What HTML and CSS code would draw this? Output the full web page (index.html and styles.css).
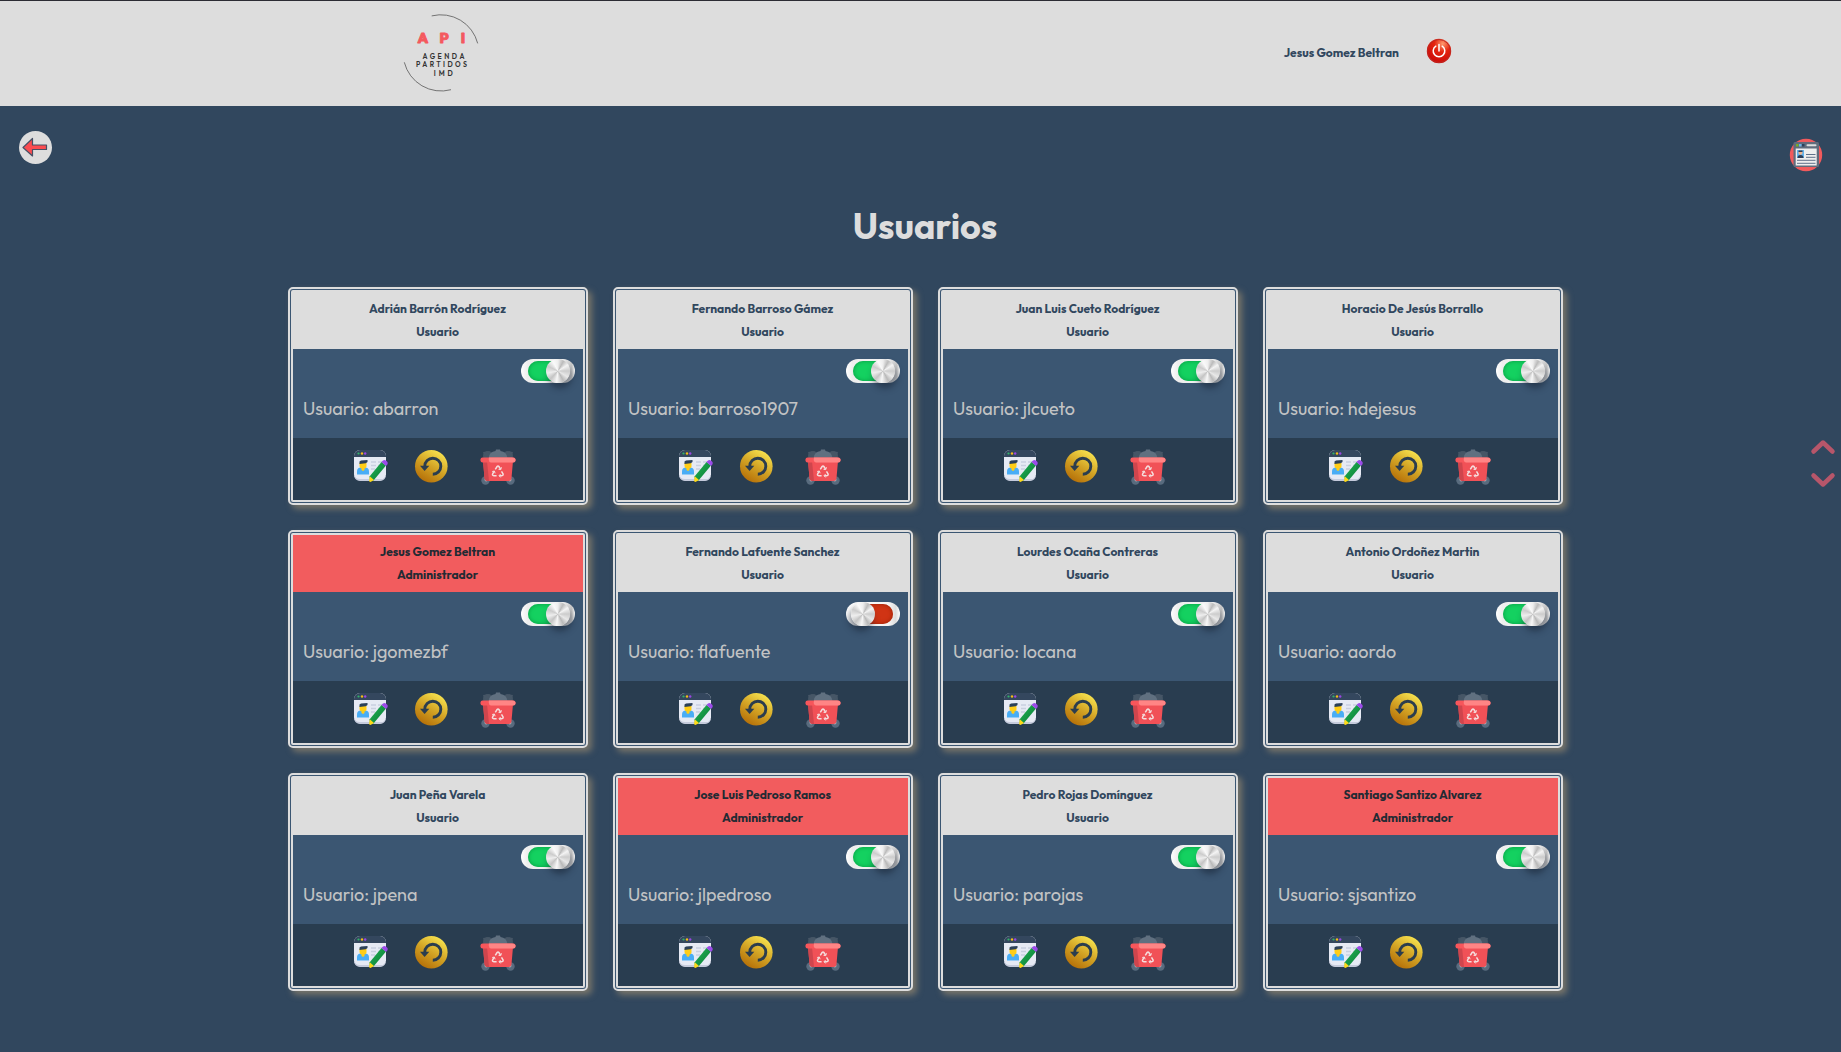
FILE: index.html
```html
<!DOCTYPE html>
<html lang="es">
<head>
<meta charset="utf-8">
<title>Usuarios</title>
<link rel="stylesheet" href="styles.css">
</head>
<body>
<svg class="sprite" width="0" height="0" aria-hidden="true">
  <defs>
    <linearGradient id="gold" x1="0.2" y1="1" x2="0.8" y2="0"><stop offset="0" stop-color="#b26a05"/><stop offset=".5" stop-color="#d3a425"/><stop offset="1" stop-color="#fbe953"/></linearGradient>
    <linearGradient id="pencil" x1="0" y1="0" x2="1" y2="1"><stop offset="0" stop-color="#22b455"/><stop offset="1" stop-color="#087a35"/></linearGradient>
    <radialGradient id="red" cx=".65" cy=".2" r=".85"><stop offset="0" stop-color="#ff9a6e"/><stop offset=".4" stop-color="#e3240f"/><stop offset="1" stop-color="#c90808"/></radialGradient>
  </defs>
  <symbol id="edit" viewBox="0 0 35 34">
    <rect x="1" y="1" width="32" height="30.500" rx="6" fill="#e6eaf4"/>
    <path d="M1 25v1a6 6 0 0 0 6 6h20a6 6 0 0 0 6-6v-1a5 5 0 0 1-6 5H7a6 6 0 0 1-6-5z" fill="#c5cbdc"/>
    <path d="M1 8V7a6 6 0 0 1 6-6h20a6 6 0 0 1 6 6v1z" fill="#34475e"/>
    <circle cx="5.500" cy="4.500" r="1.100" fill="#2fb567"/><circle cx="9" cy="4.500" r="1.200" fill="#f3bc19"/><circle cx="12.200" cy="4.500" r="1.200" fill="#9b45e4"/>
    <path d="M18 13h5M25 13h6M18 16.500h5M25 16.500h4M18 20h4" stroke="#c9d0df" stroke-width="1.300"/>
    <path d="M4 25.500v-3q0-4 4-4h4q4 0 4 4v3z" fill="#49adf5"/>
    <path d="M6.500 14h7v3.500q-.3 2-2 2v1.500l-1.500 1-1.500-1v-1.500q-2-.5-2-2.500z" fill="#ffcd16"/>
    <path d="M6.500 15v-2.500l1.500-1 6.500-.5v2q-1.500 1.500-4 1.500z" fill="#2b4057"/>
    <path d="M16.500 27.500 28.500 13l4.500 3.500-12.500 15-3.500.5z" fill="url(#pencil)"/>
    <path d="M16.800 27.200 21 31l-3.500 2-1.500-.8z" fill="#ffd918"/>
    <path d="m28.500 13 1.500-1.500q1.500-1 3.500.5t.8 3.500L33 17z" fill="#9b4be8"/>
  </symbol>
  <symbol id="reset" viewBox="0 0 34 34">
    <circle cx="17.300" cy="17.200" r="16.300" fill="url(#gold)"/>
    <path d="M10.800 17.200a8 8 0 1 1 8 8" fill="none" stroke="#2b3d4e" stroke-width="2.900"/>
    <path d="M6 16.700h9.300l-4.700 5.200z" fill="#2b3d4e"/>
  </symbol>
  <symbol id="trash" viewBox="0 0 36 36">
    <g fill="#465666"><circle cx="8" cy="7" r="5"/><circle cx="28" cy="7" r="5"/><path d="m3 3 4-.5-3 4zM33 3l-4-.5 3 4z"/></g>
    <path d="M8.500 9q1-6.500 7-7l.5-1.500h4l.5 1.500q6 .5 7 7z" fill="#607080"/>
    <circle cx="5.500" cy="31.500" r="4.200" fill="#586b7e"/><circle cx="30.500" cy="31.500" r="4.200" fill="#586b7e"/>
    <circle cx="6.200" cy="30.800" r="1.700" fill="#a5afb8"/><circle cx="29.800" cy="30.800" r="1.700" fill="#a5afb8"/>
    <path d="M3 12h30l-1.500 17q-.2 3-3 3h-21q-2.500 0-3-3z" fill="#f15157"/>
    <path d="M3 12h4l2 20H7.500q-2.500 0-3-3z" fill="#cf454d"/>
    <rect x=".5" y="8.500" width="35" height="5" rx="2" fill="#f7565b"/><path d="M9 8.500h23q3.500 0 3.500 2.500t-3 2.500H11q-3-.5-2-5z" fill="#ff8585"/>
    <g fill="none" stroke="#f5dede" stroke-width="1.500"><path d="m15.300 20.300 1.800-2.800q.9-1.200 1.800 0l1.600 2.600M21.500 22.300l1.500 2.500q.6 1.800-1.200 1.900h-2.600M16.600 26.700h-2.700q-2-.2-1.200-1.900l1.300-2.400"/><path d="m18.500 20.300 2.300.3.600-2.400M20.600 25l-1.500 1.700 1.500 1.700M12.200 22.500l2.200-.5.700 2.300" stroke-width="1"/></g>
  </symbol>
</svg>

<header class="navbar">
  <svg class="logo" width="80" height="80" viewBox="401 13 80 80">
    <path d="M431.700 15.900A38 38 0 0 1 477.700 43.400M404.300 62.300A38 38 0 0 0 451 89.700" fill="none" stroke="#666" stroke-width=".9"/>
    <g class="logo-name"><text x="417.500" y="43.300">A</text><text x="439.500" y="43.300">P</text><text x="460.800" y="43.300">I</text></g>
    <g class="logo-sub"><text x="422.500" y="58.800" textLength="42">AGENDA</text><text x="416" y="67.300" textLength="51">PARTIDOS</text><text x="433.800" y="75.800" textLength="19">IMD</text></g>
  </svg>
  <div class="session">
    <span class="session-name">Jesus Gomez Beltran</span>
    <svg width="26" height="26" viewBox="0 0 26 26"><circle cx="13" cy="13" r="12.200" fill="url(#red)"/><circle cx="13" cy="13" r="11.500" fill="none" stroke="#bd2a23" stroke-width="1"/><path d="M9.800 8.200a5.800 5.800 0 1 0 6.400 0M13 6.500v6.500" fill="none" stroke="#fff" stroke-width="1.500" stroke-linecap="round"/></svg>
  </div>
</header>

<div class="toolbar">
  <svg class="back" width="34" height="34" viewBox="0 0 34 34"><circle cx="16.500" cy="16.500" r="16.500" fill="#ddd"/><path d="M4 16.500 13.500 7.500V14h14v4.500h-14V25z" fill="#fb4c50" stroke="#475064" stroke-width="1.200" stroke-linejoin="round"/></svg>
  <svg class="listing" width="34" height="34" viewBox="0 0 34 34"><circle cx="17" cy="17" r="16.200" fill="#f15a5c"/><rect x="4.500" y="4" width="25.500" height="25" rx="1.500" fill="#606c7c"/><rect x="6.700" y="10.500" width="21" height="17" fill="#eee"/><rect x="7" y="6" width="2.500" height="2.500" fill="#79ad26"/><rect x="10" y="6" width="2.500" height="2.500" fill="#6ab1e7"/><rect x="13" y="6" width="2.500" height="2.500" fill="#2c405b"/><rect x="17.500" y="6.200" width="10" height="2" rx="1" fill="#ddd"/><rect x="8" y="12" width="7" height="8" fill="#62b3ed"/><path d="M8.500 20q0-3 3-3t3 3z" fill="#2c3d58"/><circle cx="11.500" cy="14.700" r="2" fill="#f0b48d"/><path d="M9.500 14v-1.500h4V14z" fill="#343b4d"/><path d="M17 16.500h9.500M17 19.300h9.500M8 22.300h18.500M8 25.300h18.500" stroke="#607089" stroke-width="1"/></svg>
</div>

<nav class="scroller">
  <svg width="26" height="16" viewBox="0 0 26 16"><path d="M3.500 12.500 13 3.500l9.500 9" /></svg>
  <svg width="26" height="16" viewBox="0 0 26 16"><path d="M3.500 3.500 13 12.500l9.500-9" /></svg>
</nav>

<main class="content">
  <h1>Usuarios</h1>
  <section class="grid">
    <article class="card">
      <header><b>Adrián Barrón Rodríguez</b><b>Usuario</b></header>
      <div class="info"><span class="switch"><i></i></span><p>Usuario: abarron</p></div>
      <footer><svg class="edit"><use href="#edit"/></svg><svg class="reset"><use href="#reset"/></svg><svg class="trash"><use href="#trash"/></svg></footer>
    </article>
    <article class="card">
      <header><b>Fernando Barroso Gámez</b><b>Usuario</b></header>
      <div class="info"><span class="switch"><i></i></span><p>Usuario: barroso1907</p></div>
      <footer><svg class="edit"><use href="#edit"/></svg><svg class="reset"><use href="#reset"/></svg><svg class="trash"><use href="#trash"/></svg></footer>
    </article>
    <article class="card">
      <header><b>Juan Luis Cueto Rodríguez</b><b>Usuario</b></header>
      <div class="info"><span class="switch"><i></i></span><p>Usuario: jlcueto</p></div>
      <footer><svg class="edit"><use href="#edit"/></svg><svg class="reset"><use href="#reset"/></svg><svg class="trash"><use href="#trash"/></svg></footer>
    </article>
    <article class="card">
      <header><b>Horacio De Jesús Borrallo</b><b>Usuario</b></header>
      <div class="info"><span class="switch"><i></i></span><p>Usuario: hdejesus</p></div>
      <footer><svg class="edit"><use href="#edit"/></svg><svg class="reset"><use href="#reset"/></svg><svg class="trash"><use href="#trash"/></svg></footer>
    </article>
    <article class="card admin">
      <header><b>Jesus Gomez Beltran</b><b>Administrador</b></header>
      <div class="info"><span class="switch"><i></i></span><p>Usuario: jgomezbf</p></div>
      <footer><svg class="edit"><use href="#edit"/></svg><svg class="reset"><use href="#reset"/></svg><svg class="trash"><use href="#trash"/></svg></footer>
    </article>
    <article class="card">
      <header><b>Fernando Lafuente Sanchez</b><b>Usuario</b></header>
      <div class="info"><span class="switch off"><i></i></span><p>Usuario: flafuente</p></div>
      <footer><svg class="edit"><use href="#edit"/></svg><svg class="reset"><use href="#reset"/></svg><svg class="trash"><use href="#trash"/></svg></footer>
    </article>
    <article class="card">
      <header><b>Lourdes Ocaña Contreras</b><b>Usuario</b></header>
      <div class="info"><span class="switch"><i></i></span><p>Usuario: locana</p></div>
      <footer><svg class="edit"><use href="#edit"/></svg><svg class="reset"><use href="#reset"/></svg><svg class="trash"><use href="#trash"/></svg></footer>
    </article>
    <article class="card">
      <header><b>Antonio Ordoñez Martin</b><b>Usuario</b></header>
      <div class="info"><span class="switch"><i></i></span><p>Usuario: aordo</p></div>
      <footer><svg class="edit"><use href="#edit"/></svg><svg class="reset"><use href="#reset"/></svg><svg class="trash"><use href="#trash"/></svg></footer>
    </article>
    <article class="card">
      <header><b>Juan Peña Varela</b><b>Usuario</b></header>
      <div class="info"><span class="switch"><i></i></span><p>Usuario: jpena</p></div>
      <footer><svg class="edit"><use href="#edit"/></svg><svg class="reset"><use href="#reset"/></svg><svg class="trash"><use href="#trash"/></svg></footer>
    </article>
    <article class="card admin">
      <header><b>Jose Luis Pedroso Ramos</b><b>Administrador</b></header>
      <div class="info"><span class="switch"><i></i></span><p>Usuario: jlpedroso</p></div>
      <footer><svg class="edit"><use href="#edit"/></svg><svg class="reset"><use href="#reset"/></svg><svg class="trash"><use href="#trash"/></svg></footer>
    </article>
    <article class="card">
      <header><b>Pedro Rojas Domínguez</b><b>Usuario</b></header>
      <div class="info"><span class="switch"><i></i></span><p>Usuario: parojas</p></div>
      <footer><svg class="edit"><use href="#edit"/></svg><svg class="reset"><use href="#reset"/></svg><svg class="trash"><use href="#trash"/></svg></footer>
    </article>
    <article class="card admin">
      <header><b>Santiago Santizo Alvarez</b><b>Administrador</b></header>
      <div class="info"><span class="switch"><i></i></span><p>Usuario: sjsantizo</p></div>
      <footer><svg class="edit"><use href="#edit"/></svg><svg class="reset"><use href="#reset"/></svg><svg class="trash"><use href="#trash"/></svg></footer>
    </article>
  </section>
</main>
</body>
</html>
```
FILE: styles.css
```css
* { box-sizing: border-box; }
body { margin: 0; min-height: 1052px; background: #31475e; color: #ddd; font-family: Outfit, Lato, sans-serif; overflow: hidden; }
svg { display: block; flex: none; }
.sprite { position: absolute; }

.navbar { height: 106px; padding: 0 389px 1px 401px; display: flex; justify-content: space-between; align-items: center; background: #ddd; border-top: 1px solid #2b2b33; }
.logo-name { font: 800 14.500px Outfit, Lato, sans-serif; fill: #f4595e; stroke: #f4595e; stroke-width: .8; stroke-linejoin: round; }
.logo-sub { font: 600 7px Outfit, Lato, sans-serif; fill: #333; }
.session { display: flex; align-items: center; gap: 27px; padding-bottom: 4px; }
.session-name { color: #31475e; font-size: 12px; font-weight: 700; line-height: 20px; padding-top: 3px; }

.toolbar { height: 90px; padding: 25px 18px 0 19px; display: flex; justify-content: space-between; align-items: flex-start; }
.listing { margin-top: 7px; }

.scroller { position: fixed; right: 5px; top: 439px; display: flex; flex-direction: column; gap: 17px; }
.scroller path { fill: none; stroke: #b7566a; stroke-width: 4.500; stroke-linecap: round; stroke-linejoin: round; }

.content { width: 1275px; margin: 0 0 0 288px; }
h1 { margin: 0; height: 91px; padding-right: 1px; font-size: 36px; line-height: 59px; font-weight: 700; text-align: center; }
.grid { display: grid; grid-template-columns: repeat(4, 300px); gap: 25px; }

.card { height: 218px; display: flex; flex-direction: column; border: 5px double #ddd; border-radius: 5px; background: #3b5672; box-shadow: 4px 4px 6px #77746a; }
.card header { height: 57px; padding: 5px 1px 0 0; display: flex; flex-direction: column; align-items: center; background: #ddd; color: #31475e; font-size: 12px; line-height: 23px; }
.card.admin header { background: #f25c5e; color: #232a33; }
.info { height: 89px; padding: 10px 8px 0 10px; display: flex; flex-direction: column; }
.info p { margin: 14px 0 0; color: #c2c3c4; font-size: 18px; font-weight: 400; line-height: 24px; }
.card footer { height: 62px; padding: 11px 0 0 60px; display: flex; align-items: flex-start; background: #293d50; }
.edit { width: 35px; height: 34px; }
.reset { width: 34px; height: 34px; margin-left: 26px; }
.trash { width: 36px; height: 36px; margin-left: 32px; }

.switch { align-self: flex-end; width: 54px; height: 24px; padding: 2px 7px; border-radius: 12px; background: linear-gradient(90deg, #fff, #eee 12%, #f4f4f4 80%, #c9c9c9 94%, #fff); display: flex; }
.switch::before { content: ""; flex: none; width: 40px; height: 20px; border-radius: 10px; background: #14d160; box-shadow: inset 0 0 4px #079a42; }
.switch i { width: 24px; height: 24px; margin: -2px 0 0 -22px; flex: none; border-radius: 50%; background: conic-gradient(#eee, #bbb 8%, #f4f4f4 16%, #ccc 25%, #e8e8e8 34%, #b9b9b9 42%, #f7f7f7 52%, #c4c4c4 62%, #eee 72%, #ccc 82%, #fafafa 92%, #eee); box-shadow: 2px 5px 6px rgba(20, 30, 45, .5); }
.switch.off { background: linear-gradient(90deg, #fff, #f4f4f4 80%, #ddd 92%, #fff); }
.switch.off::before { background: #d03414; box-shadow: inset 0 0 4px #962308; }
.switch.off i { margin-left: -42px; box-shadow: -2px 5px 6px rgba(20, 30, 45, .5); }
```
